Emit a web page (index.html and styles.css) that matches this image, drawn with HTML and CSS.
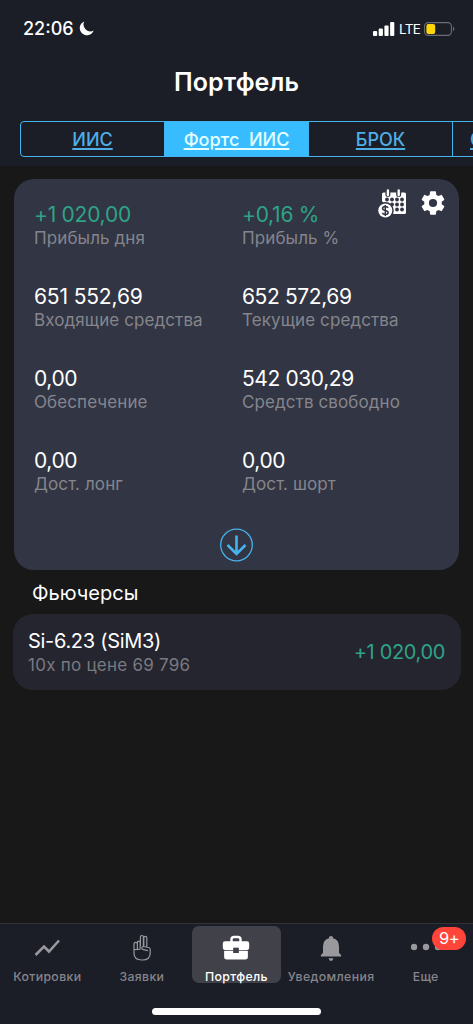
FILE: index.html
```
<!DOCTYPE html>
<html lang="ru">
<head>
<meta charset="utf-8">
<title>Портфель</title>
<link rel="stylesheet" href="styles.css">
</head>
<body>
<div class="app">
  <header class="header">
    <div class="status">
      <span class="time">22:06</span>
      <svg class="moon" width="15" height="15" viewBox="0 0 15 15"><path d="M5.2.4A7.2 7.2 0 1 0 14.700 9.600 7 7 0 0 1 5.200.400Z" fill="#fff"/></svg>
      <svg class="signal" width="22" height="14" viewBox="0 0 22 14" fill="#fff"><rect y="9" width="4.2" height="5" rx="1"/><rect x="5.7" y="6.5" width="4.2" height="7.5" rx="1"/><rect x="11.4" y="3.5" width="4.2" height="10.5" rx="1"/><rect x="17.1" width="4.2" height="14" rx="1"/></svg>
      <span class="net">LTE</span>
      <svg class="battery" width="31" height="14" viewBox="0 0 31 14"><rect x=".6" y=".6" width="26.8" height="12.8" rx="3.6" fill="none" stroke="#6b6c72" stroke-width="1.1"/><rect x="2.4" y="2" width="8.8" height="10" rx="2" fill="#ffd60a"/><path d="M29 4.8c1.8.6 1.8 3.8 0 4.4Z" fill="#6b6c72"/></svg>
    </div>
    <h1 class="title">Портфель</h1>
    <nav class="accounts">
      <a class="account"><span>ИИС</span></a>
      <a class="account account-on"><span>Фортс&nbsp; ИИС</span></a>
      <a class="account"><span>БРОК</span></a>
      <a class="account account-next"><span>Сбер</span></a>
    </nav>
  </header>

  <main class="content">
    <section class="summary">
      <div class="stats">
        <div class="stat"><b class="value up">+1 020,00</b><span class="label">Прибыль дня</span></div>
        <div class="stat"><b class="value up">+0,16 %</b><span class="label">Прибыль %</span></div>
        <div class="stat"><b class="value value-in">651 552,69</b><span class="label">Входящие средства</span></div>
        <div class="stat"><b class="value">652 572,69</b><span class="label">Текущие средства</span></div>
        <div class="stat"><b class="value">0,00</b><span class="label">Обеспечение</span></div>
        <div class="stat"><b class="value">542 030,29</b><span class="label">Средств свободно</span></div>
        <div class="stat"><b class="value">0,00</b><span class="label">Дост. лонг</span></div>
        <div class="stat"><b class="value">0,00</b><span class="label">Дост. шорт</span></div>
      </div>
      <svg class="expand" width="34" height="34" viewBox="0 0 34 34" fill="none" stroke="#45b3ee"><circle cx="16.500" cy="17" r="15.800" stroke-width="1.3"/><path d="M16.500 7.500V25.500M7.500 17l9 9 9-9" stroke-width="2.600"/></svg>
      <div class="tools">
        <svg width="29" height="29" viewBox="0 0 29 29">
          <path d="M5.5 3.5h3v3h3.2v-3h7v3h3.2v-3h4.600q1.500 0 1.500 1.500v18.500q0 1.500-1.500 1.500H14L4 12V5q0-1.500 1.500-1.500Z" fill="#fff"/>
          <path d="M9.900 1.500v4M20.700 1.500v4" stroke="#323543" stroke-width="5" stroke-linecap="round"/>
          <path d="M9.900 1.500v4.500M20.700 1.500v4.500" stroke="#fff" stroke-width="2.400" stroke-linecap="round"/>
          <g fill="#323543"><circle cx="9" cy="10.500" r="1.900"/><circle cx="14" cy="10.500" r="1.900"/><circle cx="19" cy="10.500" r="1.900"/><circle cx="24" cy="10.500" r="1.900"/><circle cx="14" cy="15.500" r="1.900"/><circle cx="19" cy="15.500" r="1.900"/><circle cx="24" cy="15.500" r="1.900"/><circle cx="19" cy="20.500" r="1.900"/><circle cx="24" cy="20.500" r="1.900"/></g>
          <circle cx="7.300" cy="21.500" r="8.500" fill="#323543"/><circle cx="7.300" cy="21.500" r="7" fill="#fff"/>
          <path d="M10 18.900c-.5-1.200-1.600-1.400-2.700-1.400-1.600 0-2.700.8-2.700 2 0 2.900 5.500 1.100 5.500 4 0 1.200-1.200 2-2.800 2-1.300 0-2.500-.5-2.900-1.700M7.300 16v11" fill="none" stroke="#323543" stroke-width="1.500"/>
        </svg>
        <svg class="gear" width="28" height="28" viewBox="0 0 24 24"><path fill="#fff" d="M19.430 12.980c.04-.32.07-.64.07-.98s-.03-.66-.07-.98l2.110-1.650c.19-.15.24-.42.12-.64l-2-3.460c-.12-.22-.39-.3-.61-.22l-2.490 1c-.52-.4-1.080-.73-1.690-.98l-.38-2.650C14.460 2.180 14.250 2 14 2h-4c-.25 0-.46.18-.49.42l-.38 2.650c-.61.25-1.170.59-1.690.98l-2.490-1c-.23-.09-.49 0-.61.22l-2 3.460c-.13.22-.07.49.12.64l2.110 1.650c-.04.32-.07.65-.07.98s.03.66.07.98l-2.110 1.650c-.19.15-.24.42-.12.64l2 3.460c.12.22.39.3.61.22l2.490-1c.52.4 1.080.73 1.690.98l.38 2.650c.03.24.24.42.49.42h4c.25 0 .46-.18.49-.42l.38-2.650c.61-.25 1.170-.59 1.690-.98l2.490 1c.23.09.49 0 .61-.22l2-3.460c.12-.22.07-.49-.12-.64l-2.110-1.650ZM12 15.500A3.500 3.500 0 1 1 12 8.500a3.500 3.500 0 0 1 0 7Z"/></svg>
      </div>
    </section>

    <h2 class="group">Фьючерсы</h2>
    <article class="position">
      <div><b class="ticker">Si-6.23 (SiM3)</b><span class="detail">10x по цене 69 796</span></div>
      <b class="result">+1 020,00</b>
    </article>
  </main>

  <footer class="tabbar">
    <nav class="tabs">
      <a class="tab"><svg width="30" height="30" viewBox="0 0 30 30" fill="none" stroke="#98989d" stroke-width="2.600"><path d="m3.500 22 8.500-8.500 5 5L27 7.500"/></svg><span>Котировки</span></a>
      <a class="tab"><svg width="30" height="30" viewBox="0 0 30 30" fill="none" stroke="#98989d" stroke-width="1.200" stroke-linejoin="round"><path d="M7 15.500V11q0-1.700 1.700-1.700T10.400 11v4.500q0 1.200-1.700 1.200T7 15.500V20q0 7 7.700 7h.8q7.700 0 7.700-7v-3.500q0-1.500-1.500-2l-5.200-1q-1.700 0-1.700 1.600 0 1.300 1.500 1.600l4.700 1M10.400 11V9.500q0-1.400 1.400-1.400t1.400 1.400v6q0 1-1.400 1t-1.400-1M13.400 13V4q0-1.500 1.500-1.500T16.400 4v9.500M16.800 13V4.800q0-1.500 1.500-1.500t1.500 1.500V14"/></svg><span>Заявки</span></a>
      <a class="tab tab-on"><svg width="30" height="30" viewBox="0 0 30 30" fill="#fff"><path d="M10.500 9V6.500q0-2.500 2.500-2.500h4q2.500 0 2.500 2.500V9" fill="none" stroke="#fff" stroke-width="2.400"/><path d="M4 8.200h22q2.200 0 2.200 2.200v3.800q0 3-3 3h-7.400v-2.500h-5.600v2.500H4.800q-3 0-3-3v-3.800Q1.800 8.200 4 8.200ZM3.100 18.100h9.100V20h5.600v-1.900h9.100v5.700q0 2.700-2.700 2.700H5.800q-2.700 0-2.700-2.700Z"/><rect x="12.800" y="14.900" width="4.400" height="4.600" fill="#414149"/></svg><span>Портфель</span></a>
      <a class="tab"><svg width="30" height="30" viewBox="0 0 30 30" fill="#98989d"><path d="M13 5.300V4.500q0-1.500 2-1.500t2 1.500v.8q6 1.500 6 8.200v6.300l2.200 2.400v1.300H4.800v-1.300L7 19.800v-6.300q0-6.700 6-8.200ZM12.600 25.300h4.800q-.4 2.600-2.400 2.600t-2.400-2.600Z"/></svg><span>Уведомления</span></a>
      <a class="tab"><svg width="30" height="30" viewBox="0 0 30 30" fill="#98989d"><circle cx="3" cy="14" r="3.200"/><circle cx="15" cy="14" r="3.200"/><circle cx="27" cy="14" r="3.200"/></svg><span>Еще</span><em class="badge">9+</em></a>
    </nav>
    <div class="home"></div>
  </footer>
</div>
</body>
</html>
```
FILE: styles.css
```
* { box-sizing: border-box; }
body { margin: 0; background: #181818; font-family: Inter, "Noto Sans", sans-serif; color: #fff; }
b { font-weight: 400; }
svg { display: block; flex: none; }
.app { width: 473px; height: 1024px; display: flex; flex-direction: column; overflow: hidden; }
.header { height: 166px; background: #1b1d27; flex: none; overflow: hidden; }
.status { display: flex; align-items: center; height: 57px; padding: 0 18px 0 23px; }
.time { font-size: 18px; font-weight: 500; letter-spacing: 0; width: 51px; white-space: nowrap; }
.moon { margin-left: 5px; }
.signal { margin-left: auto; }
.net { font-size: 13.500px; width: 21px; margin: 0 4px; letter-spacing: -.7px; }
.title { margin: 0; height: 64px; line-height: 50px; font-size: 25px; font-weight: 600; letter-spacing: .1px; text-align: center; }
.accounts { display: flex; width: 600px; height: 36px; margin-left: 20px; border: 1px solid #45b3ee; border-radius: 4px; }
.account { width: 144px; flex: none; display: flex; align-items: center; justify-content: center; border-right: 1px solid #45b3ee; color: #4eaee5; font-size: 18px; font-weight: 500; }
.account span { text-decoration: underline; text-decoration-thickness: 2px; text-underline-offset: 2px; line-height: 20px; margin-top: 1px; white-space: nowrap; }
.account-on { background: #37bdff; color: #e4ffff; }
.account-next { justify-content: flex-start; padding-left: 17px; }
.content { flex: 1; }
.summary { position: relative; width: 445px; height: 391px; margin: 13px 0 0 14px; padding: 24px 20px 0; border-radius: 20px; background: #323543; }
.stats { display: grid; grid-template-columns: 208px 1fr; grid-auto-rows: 82px; }
.stat { display: flex; flex-direction: column; white-space: nowrap; }
.value { font-size: 21px; line-height: 24px; letter-spacing: -.4px; }
.value-in { letter-spacing: -.15px; }
.label { font-size: 17px; line-height: 22px; letter-spacing: .1px; color: #85858d; }
.up { color: #2ea387; letter-spacing: -.25px; }
.expand { margin: -3px auto 0; }
.tools { position: absolute; top: 10px; right: 12px; display: flex; gap: 12px; }
.group { margin: 0 0 0 32px; height: 44px; line-height: 46px; font-size: 20px; font-weight: 400; }
.position { display: flex; align-items: center; justify-content: space-between; width: 448px; height: 76px; margin-left: 13px; padding: 0 16px 0 15px; border-radius: 20px; background: #25252f; white-space: nowrap; }
.position > div { display: flex; flex-direction: column; padding-top: 1px; }
.ticker { font-size: 20px; line-height: 25px; letter-spacing: -.3px; }
.detail { font-size: 17px; line-height: 23px; letter-spacing: .25px; color: #797980; }
.result { font-size: 20px; letter-spacing: -.35px; color: #2ea387; }
.tabbar { height: 101px; flex: none; border-top: 1px solid #323238; background: #1b1d27; }
.tabs { display: grid; grid-template-columns: repeat(5, 94.600px); height: 84px; padding-top: 2px; align-items: start; justify-items: center; }
.tab { position: relative; width: 89px; height: 57px; padding-top: 7px; display: flex; flex-direction: column; align-items: center; gap: 6px; color: #85858b; font-size: 12.300px; font-weight: 500; line-height: 15px; letter-spacing: .35px; white-space: nowrap; }
.tab-on { background: #414149; border-radius: 7px; color: #fff; }
.badge { position: absolute; left: 51px; top: 1px; width: 34px; height: 23px; border-radius: 12px; background: #ff453a; color: #fff; font-style: normal; font-weight: 400; font-size: 16.500px; line-height: 23px; letter-spacing: -.3px; text-align: center; }
.home { width: 169px; height: 7px; margin: 0 auto; border-radius: 4px; background: #fff; }
```
